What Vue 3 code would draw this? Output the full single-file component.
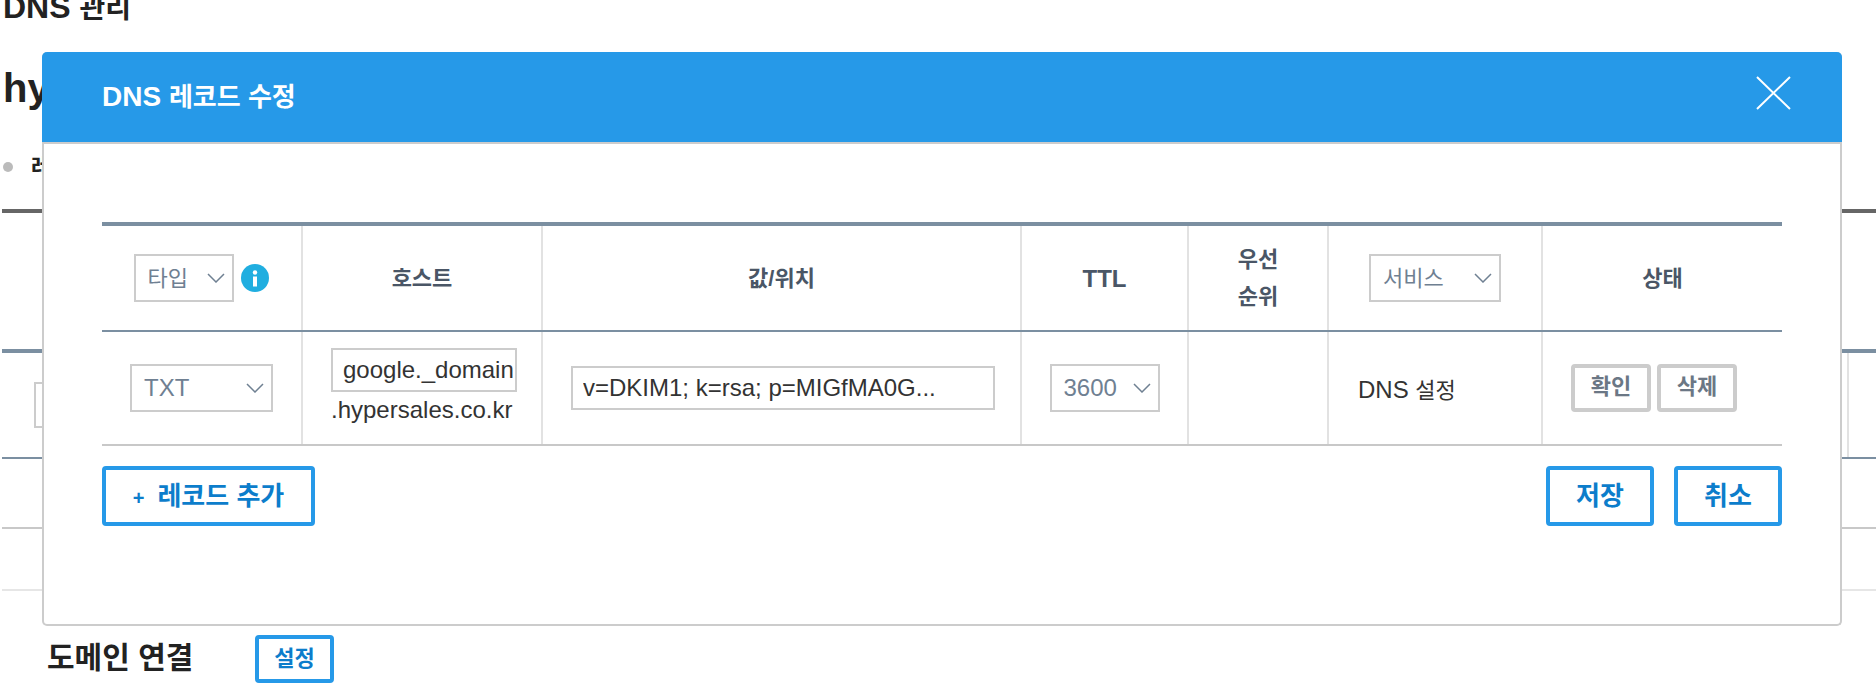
<script setup>
const closeLines = 'M1 1 L34 33 M34 1 L1 33'
</script>

<template>
  <div class="page">
    <h2 class="page-title">DNS <span class="ko">관리</span></h2>
    <h1 class="domain">hypersales.co.kr</h1>
    <div class="bullet-row"><span class="bullet"></span><b>레코드 관리</b></div>
    <div class="dark-rule"></div>
    <div class="bg-gap"></div>
    <div class="bg-head"></div>
    <div class="bg-row">
      <span class="bg-input"></span>
      <span class="bg-cell"></span>
    </div>
    <div class="bg-row2"></div>
    <div class="bg-row3"></div>
    <div class="connect">
      <span class="connect-title">도메인 연결</span>
      <button class="btn small">설정</button>
    </div>

    <div class="modal">
      <header class="modal-head">
        <span class="modal-title">DNS <span class="ko">레코드 수정</span></span>
        <svg class="close" width="35" height="34" viewBox="0 0 35 34">
          <path :d="closeLines" stroke="#fff" stroke-width="2" fill="none" />
        </svg>
      </header>
      <div class="modal-body">
        <table class="records">
          <colgroup>
            <col class="c1" /><col class="c2" /><col class="c3" /><col class="c4" />
            <col class="c5" /><col class="c6" /><col class="c7" />
          </colgroup>
          <thead>
            <tr>
              <th>
                <div class="type-head">
                  <div class="select type-filter"><span class="ko-sel">타입</span><svg class="chev" width="18" height="10" viewBox="0 0 18 10"><path d="M1 1 L9 9 L17 1" /></svg></div>
                  <svg class="info" width="28" height="28" viewBox="0 0 28 28">
                    <circle cx="14" cy="14" r="14" fill="#20aee0" />
                    <circle cx="14" cy="8.5" r="2.2" fill="#fff" />
                    <rect x="12" y="12.5" width="4" height="10" fill="#fff" />
                  </svg>
                </div>
              </th>
              <th>호스트</th>
              <th>값/위치</th>
              <th class="latin">TTL</th>
              <th>우선<br />순위</th>
              <th>
                <div class="select service-filter"><span class="ko-sel">서비스</span><svg class="chev" width="18" height="10" viewBox="0 0 18 10"><path d="M1 1 L9 9 L17 1" /></svg></div>
              </th>
              <th>상태</th>
            </tr>
          </thead>
          <tbody>
            <tr>
              <td>
                <div class="select type-select"><span>TXT</span><svg class="chev" width="18" height="10" viewBox="0 0 18 10"><path d="M1 1 L9 9 L17 1" /></svg></div>
              </td>
              <td class="host">
                <input class="field host-input" value="google._domain" />
                <div class="suffix">.hypersales.co.kr</div>
              </td>
              <td>
                <input class="field value-input" value="v=DKIM1; k=rsa; p=MIGfMA0G..." />
              </td>
              <td>
                <div class="select ttl-select"><span>3600</span><svg class="chev" width="18" height="10" viewBox="0 0 18 10"><path d="M1 1 L9 9 L17 1" /></svg></div>
              </td>
              <td></td>
              <td class="service">DNS <span class="ko-cell">설정</span></td>
              <td>
                <div class="actions">
                  <button class="mini">확인</button>
                  <button class="mini">삭제</button>
                </div>
              </td>
            </tr>
          </tbody>
        </table>
        <div class="foot">
          <button class="btn add"><span class="plus">+</span>레코드 추가</button>
          <div class="foot-right">
            <button class="btn save">저장</button>
            <button class="btn save">취소</button>
          </div>
        </div>
      </div>
    </div>
  </div>
</template>

<style>
html, body { margin: 0; background: #fff; overflow: hidden; }
</style>

<style scoped>
.page {
  position: relative;
  width: 1876px;
  height: 696px;
  overflow: hidden;
  background: #fff;
  color: #222;
  font-family: "Liberation Sans", "Noto Sans CJK KR", sans-serif;
}
.page-title { height: 36px; margin: -11px 0 0 3px; font-size: 32px; line-height: 36px; font-weight: 700; }
.page-title .ko { font-size: 28px; }
.domain { margin: 40px 0 0 3px; font-size: 40px; line-height: 46px; font-weight: 700; }
.bullet-row { display: flex; align-items: center; gap: 18px; margin: 43px 0 0 3px; font-size: 22px; line-height: 26px; height: 26px; }
.bullet { width: 10px; height: 10px; border-radius: 50%; background: #bbb; }
.dark-rule { height: 4px; margin: 29px 0 0 2px; background: #666; }
.bg-gap { height: 136px; }
.bg-head { height: 4px; margin-left: 2px; background: #7b8fa1; }
.bg-row { display: flex; justify-content: space-between; height: 104px; margin-left: 2px; padding-top: 29px; box-sizing: border-box; }
.bg-input { width: 60px; height: 46px; margin-left: 32px; border: 2px solid #ccc; box-sizing: border-box; }
.bg-cell { width: 2px; height: 104px; margin: -29px 27px 0 0; background: #e2e2e2; }
.bg-row2 { height: 72px; margin-left: 2px; border-top: 2px solid #7b8fa1; border-bottom: 2px solid #c8c8c8; box-sizing: border-box; }
.bg-row3 { height: 62px; margin-left: 2px; border-bottom: 2px solid #e6e6e6; box-sizing: border-box; }
.connect { display: flex; align-items: center; margin: 44px 0 0 47px; height: 48px; }
.connect-title { width: 208px; padding-bottom: 8px; font-size: 30px; font-weight: 700; color: #222; }

.modal {
  position: absolute;
  left: 42px;
  top: 52px;
  width: 1800px;
  height: 574px;
  box-sizing: border-box;
  background: #fff;
  border: 2px solid #ccc;
  border-top: 0;
  border-radius: 5px;
}
.modal-head {
  display: flex;
  align-items: center;
  justify-content: space-between;
  height: 92px;
  margin: 0 -2px;
  padding: 0 51px 0 60px;
  box-sizing: border-box;
  background: #2699e8;
  border-bottom: 2px solid #ccc;
  border-radius: 5px 5px 0 0;
}
.modal-title { padding-bottom: 5px; color: #fff; font-size: 28px; font-weight: 700; }
.modal-title .ko { font-size: 26px; }
.close { display: block; margin-bottom: 8px; }
.modal-body { padding: 78px 58px 0 58px; }

.records { width: 1680px; table-layout: fixed; border-collapse: collapse; border-top: 4px solid #7b8fa1; }
.c1 { width: 200px; } .c2 { width: 240px; } .c3 { width: 479px; } .c4 { width: 167px; }
.c5 { width: 140px; } .c6 { width: 214px; } .c7 { width: 240px; }
.records th, .records td { padding: 0; text-align: center; vertical-align: middle; border-left: 2px solid #e2e2e2; }
.records th:first-child, .records td:first-child { border-left: 0; }
.records th { height: 104px; font-size: 22px; line-height: 37px; font-weight: 700; color: #4a5666; border-bottom: 2px solid #7b8fa1; }
.records th.latin { font-size: 24px; }
.records td { height: 112px; border-bottom: 2px solid #c8c8c8; font-size: 24px; }

.select {
  display: inline-flex;
  align-items: center;
  justify-content: space-between;
  height: 48px;
  box-sizing: border-box;
  border: 2px solid #ccc;
  padding: 0 7px 0 12px;
  background: #fff;
  color: #6f8092;
  font-size: 24px;
  font-weight: 400;
}
.ko-sel { font-size: 22px; }
.chev { display: block; }
.chev path { fill: none; stroke: #6f8092; stroke-width: 1.5; }
.type-head { display: flex; align-items: center; justify-content: center; gap: 7px; padding-right: 1px; }
.type-filter { width: 100px; }
.service-filter { width: 132px; }
.type-select { width: 143px; }
.ttl-select { width: 110px; }

.field {
  display: block;
  box-sizing: border-box;
  height: 44px;
  border: 2px solid #ccc;
  border-radius: 0;
  padding: 0 0 0 10px;
  outline: 0;
  color: #333;
  font-family: inherit;
  font-size: 24px;
}
.host { text-align: left !important; padding-left: 28px !important; }
.host-input { width: 186px; }
.suffix { font-size: 24px; line-height: 36px; color: #333; }
.value-input { width: 424px; margin-left: 28px; }
.service { text-align: left !important; padding-left: 29px !important; color: #333; }
.ko-cell { font-size: 22px; }
.actions { display: flex; gap: 6px; padding-left: 28px; }
.mini {
  width: 80px;
  height: 48px;
  padding: 0 0 8px;
  box-sizing: border-box;
  background: #fff;
  border: 4px solid #ccc;
  border-radius: 4px;
  color: #6b7785;
  font-family: inherit;
  font-size: 22px;
  font-weight: 700;
}

.foot { display: flex; justify-content: space-between; margin-top: 20px; }
.foot-right { display: flex; gap: 20px; }
.btn {
  box-sizing: border-box;
  background: #fff;
  border: 4px solid #2699e8;
  border-radius: 4px;
  color: #0c7dcb;
  font-family: inherit;
  font-weight: 700;
  padding: 0;
}
.add { width: 213px; height: 60px; font-size: 26px; padding-bottom: 6px; }
.plus { margin-right: 13px; font-size: 20px; }
.save { width: 108px; height: 60px; font-size: 26px; padding-bottom: 6px; }
.small { width: 79px; height: 48px; font-size: 22px; padding-bottom: 6px; }
</style>
